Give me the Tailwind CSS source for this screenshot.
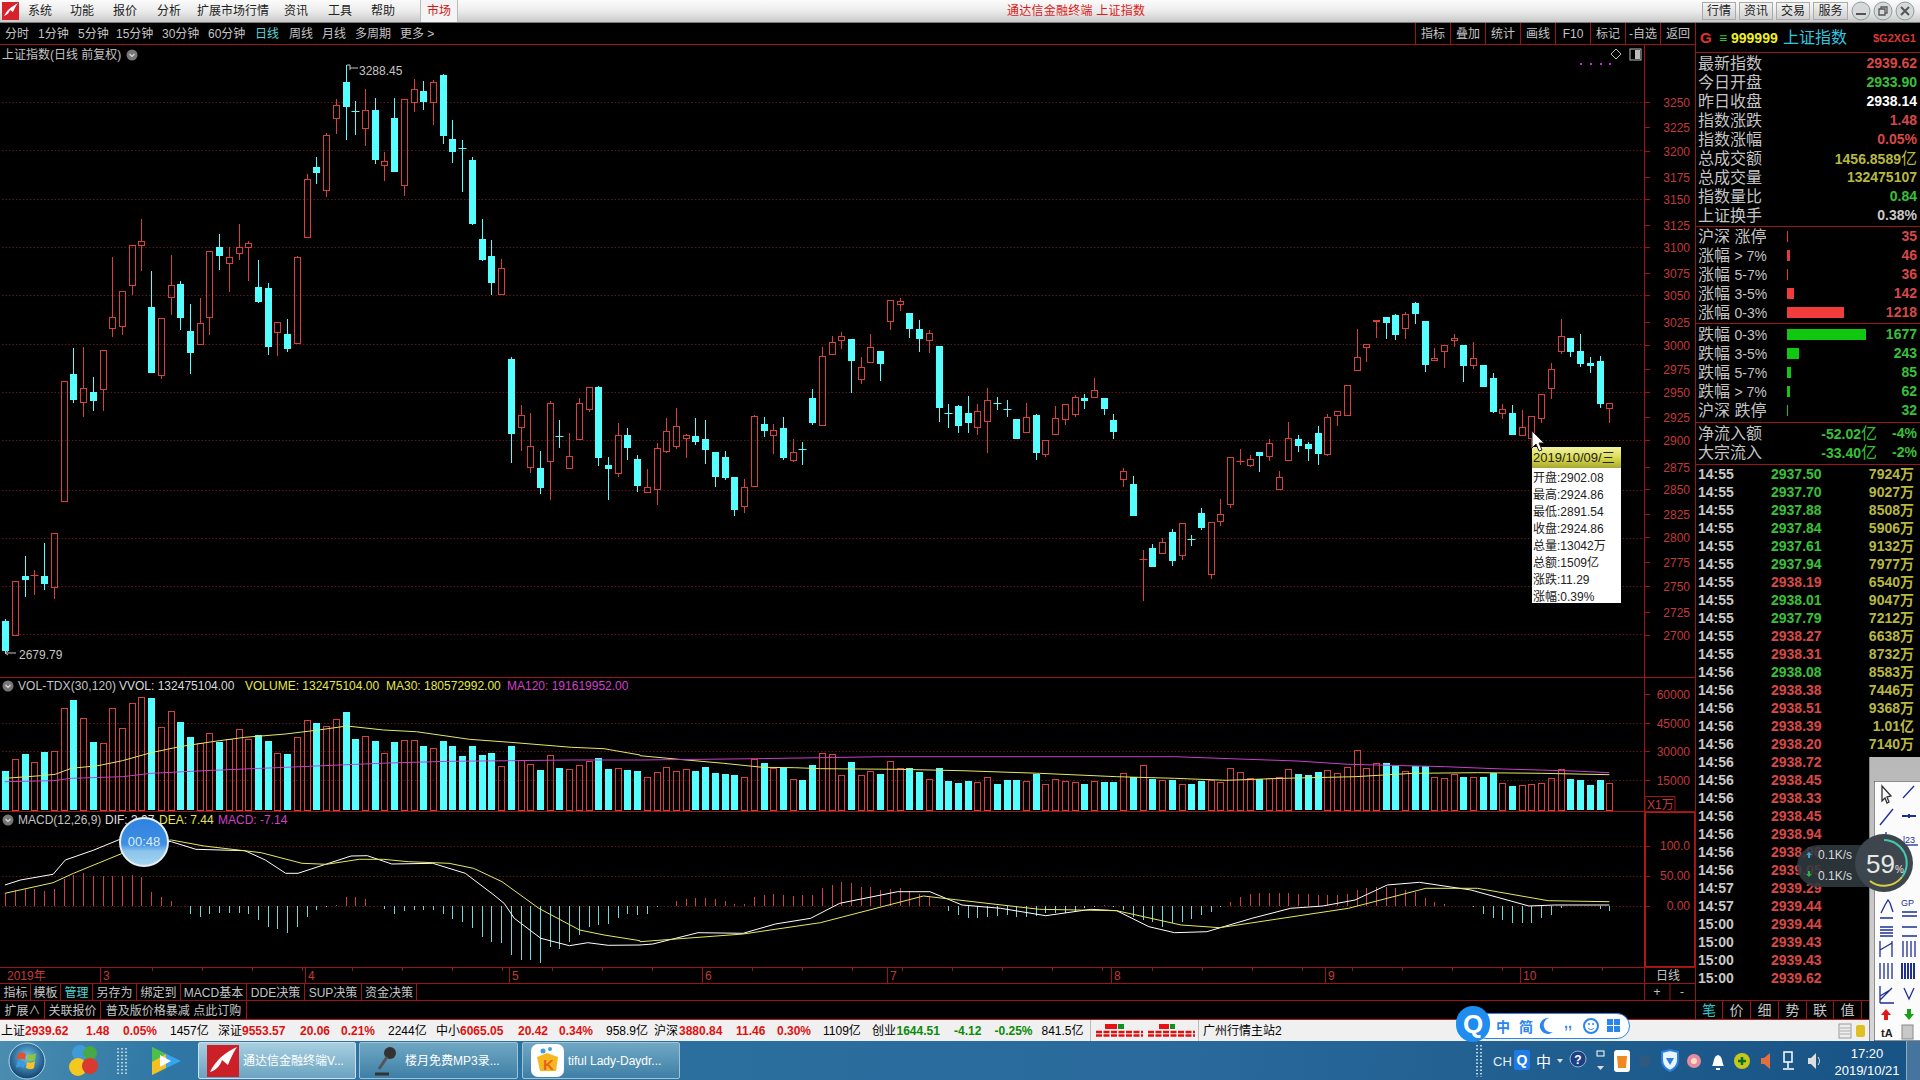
<!DOCTYPE html>
<html lang="zh-CN">
<head>
    <meta charset="UTF-8">
    <title>通达信金融终端 上证指数</title>
    <script src="https://cdn.jsdelivr.net/npm/@tailwindcss/browser@4"></script>
</head>
<body class="relative w-[1920px] h-[1080px] overflow-hidden bg-black flex flex-col text-[12px] text-[#c4c4c4] [font-family:'Liberation_Sans','Noto_Sans_CJK_SC',sans-serif]">

    <!-- chart canvas, filled by the script at the bottom -->
    <svg id="chart" class="absolute left-0 top-0" width="1920" height="1080" viewBox="0 0 1920 1080"></svg>

    <!-- title bar -->
    <div class="relative h-[23px] shrink-0 flex items-center border-b border-[#7c7c7c] bg-gradient-to-b from-[#fbfbfb] via-[#ececec] to-[#c9c9c9] text-[#222]">
        <div class="w-[28px] pl-[2px]">
            <svg width="17" height="18" viewBox="0 0 17 18"><rect width="17" height="18" fill="#d8222a"/><path d="M2 14 C5 8 9 5 16 1 C13 5 12 8 11 10 L8 8 C7 11 5 13 2 14Z" fill="#fff"/></svg>
        </div>
        <div class="w-[42px]">系统</div>
        <div class="w-[43px]">功能</div>
        <div class="w-[44px]">报价</div>
        <div class="w-[40px]">分析</div>
        <div class="w-[87px]">扩展市场行情</div>
        <div class="w-[44px]">资讯</div>
        <div class="w-[43px]">工具</div>
        <div class="w-[49px]">帮助</div>
        <div class="w-[38px] h-[22px] flex items-center justify-center border-x border-[#bbb] bg-[#f4f4f4] text-[#d01818]">市场</div>
        <div class="w-[549px]"></div>
        <div class="w-[138px] text-[#e01818] whitespace-nowrap tracking-[0.25px]">通达信金融终端 上证指数</div>
        <div class="flex-1"></div>
        <div class="flex gap-[3px] mr-[3px]">
            <div class="w-[34px] h-[18px] flex items-center justify-center border border-[#aaa] bg-gradient-to-b from-[#f4f4f4] to-[#cfcfcf]">行情</div>
            <div class="w-[34px] h-[18px] flex items-center justify-center border border-[#aaa] bg-gradient-to-b from-[#f4f4f4] to-[#cfcfcf]">资讯</div>
            <div class="w-[34px] h-[18px] flex items-center justify-center border border-[#aaa] bg-gradient-to-b from-[#f4f4f4] to-[#cfcfcf]">交易</div>
            <div class="w-[35px] h-[18px] flex items-center justify-center border border-[#aaa] bg-gradient-to-b from-[#f4f4f4] to-[#cfcfcf]">服务</div>
        </div>
        <div class="flex gap-[2px] pr-[5px]">
            <svg width="20" height="20" viewBox="0 0 20 20"><circle cx="10" cy="10" r="9" fill="#d6d9da" stroke="#8a9a9c"/><path d="M5 13h10" stroke="#555" stroke-width="2"/></svg>
            <svg width="20" height="20" viewBox="0 0 20 20"><circle cx="10" cy="10" r="9" fill="#d6d9da" stroke="#8a9a9c"/><path d="M6 8h6v6H6zM8 8V6h6v6h-2" fill="none" stroke="#555" stroke-width="1.3"/></svg>
            <svg width="20" height="20" viewBox="0 0 20 20"><circle cx="10" cy="10" r="9" fill="#d6d9da" stroke="#8a9a9c"/><path d="M6 6l8 8M14 6l-8 8" stroke="#555" stroke-width="2"/></svg>
        </div>
    </div>

    <!-- main area -->
    <div class="relative h-[996px] shrink-0 flex">

        <!-- left: period bar and chart panes -->
        <div class="w-[1695px] flex flex-col">
            <div class="h-[22px] flex items-center pl-[5px] border-b border-[#9c1414]">
                <div class="w-[33px]">分时</div>
                <div class="w-[40px]">1分钟</div>
                <div class="w-[38px]">5分钟</div>
                <div class="w-[46px]">15分钟</div>
                <div class="w-[46px]">30分钟</div>
                <div class="w-[47px]">60分钟</div>
                <div class="w-[34px] text-[#4fd8d8]">日线</div>
                <div class="w-[33px]">周线</div>
                <div class="w-[33px]">月线</div>
                <div class="w-[45px]">多周期</div>
                <div>更多 &gt;</div>
                <div class="flex-1"></div>
                <div class="w-[35px] h-full flex items-center justify-center border-l border-[#9c1414]">指标</div>
                <div class="w-[35px] h-full flex items-center justify-center border-l border-[#9c1414]">叠加</div>
                <div class="w-[35px] h-full flex items-center justify-center border-l border-[#9c1414]">统计</div>
                <div class="w-[35px] h-full flex items-center justify-center border-l border-[#9c1414]">画线</div>
                <div class="w-[35px] h-full flex items-center justify-center border-l border-[#9c1414]">F10</div>
                <div class="w-[35px] h-full flex items-center justify-center border-l border-[#9c1414]">标记</div>
                <div class="w-[35px] h-full flex items-center justify-center border-l border-[#9c1414]">-自选</div>
                <div class="w-[35px] h-full flex items-center justify-center border-l border-[#9c1414]">返回</div>
            </div>

            <div class="h-[633px] border-b border-[#9c1414] pl-[2px] pt-[1px]">
                <div class="flex items-center gap-[5px] h-[17px]">
                    <span>上证指数(日线 前复权)</span>
                    <svg width="12" height="12" viewBox="0 0 12 12"><circle cx="6" cy="6" r="5.5" fill="#777"/><path d="M3.5 5l2.5 2.5L8.5 5" fill="none" stroke="#ddd" stroke-width="1.2"/></svg>
                </div>
            </div>

            <div class="h-[134px] border-b border-[#9c1414] pl-[2px]">
                <div class="flex items-center h-[15px] whitespace-nowrap">
                    <svg class="w-[12px] mr-[4px]" width="12" height="12" viewBox="0 0 12 12"><circle cx="6" cy="6" r="5.5" fill="#777"/><path d="M3.5 5l2.5 2.5L8.5 5" fill="none" stroke="#ddd" stroke-width="1.2"/></svg>
                    <span class="w-[101px] tracking-[0.1px]">VOL-TDX(30,120)</span>
                    <span class="w-[126px] text-[#d8d8d8]">VVOL: 132475104.00</span>
                    <span class="w-[141px] text-[#e6e650]">VOLUME: 132475104.00</span>
                    <span class="w-[121px] text-[#e6e650]">MA30: 180572992.00</span>
                    <span class="text-[#d040c8]">MA120: 191619952.00</span>
                </div>
            </div>

            <div class="h-[156px] border-b border-[#9c1414] pl-[2px]">
                <div class="flex items-center h-[15px] whitespace-nowrap">
                    <svg class="w-[12px] mr-[4px]" width="12" height="12" viewBox="0 0 12 12"><circle cx="6" cy="6" r="5.5" fill="#777"/><path d="M3.5 5l2.5 2.5L8.5 5" fill="none" stroke="#ddd" stroke-width="1.2"/></svg>
                    <span class="w-[87px]">MACD(12,26,9)</span>
                    <span class="w-[54px] text-[#e0e0e0]">DIF: 3.07</span>
                    <span class="w-[59px] text-[#e6e650]">DEA: 7.44</span>
                    <span class="text-[#d040c8]">MACD: -7.14</span>
                </div>
            </div>

            <div class="h-[16px] border-b border-[#9c1414]"></div>

            <div class="h-[17px] flex border-b border-[#9c1414] pl-[1px]">
                <div class="w-[30px] pt-[2px] flex items-center justify-center border-r border-[#9c1414]">指标</div>
                <div class="w-[30px] pt-[2px] flex items-center justify-center border-r border-[#9c1414]">模板</div>
                <div class="w-[32px] pt-[2px] flex items-center justify-center border-r border-[#9c1414] text-[#4fd8d8]">管理</div>
                <div class="w-[44px] pt-[2px] flex items-center justify-center border-r border-[#9c1414]">另存为</div>
                <div class="w-[44px] pt-[2px] flex items-center justify-center border-r border-[#9c1414]">绑定到</div>
                <div class="w-[66px] pt-[2px] flex items-center justify-center border-r border-[#9c1414]">MACD基本</div>
                <div class="w-[58px] pt-[2px] flex items-center justify-center border-r border-[#9c1414]">DDE决策</div>
                <div class="w-[57px] pt-[2px] flex items-center justify-center border-r border-[#9c1414]">SUP决策</div>
                <div class="w-[55px] pt-[2px] flex items-center justify-center border-r border-[#9c1414]">资金决策</div>
            </div>

            <div class="h-[18px] flex pl-[1px]">
                <div class="w-[44px] pt-[2px] flex items-center justify-center border-r border-[#9c1414]">扩展∧</div>
                <div class="w-[56px] pt-[2px] flex items-center justify-center border-r border-[#9c1414]">关联报价</div>
                <div class="w-[146px] pt-[2px] flex items-center justify-center border-r border-[#9c1414]">普及版价格暴减 点此订购</div>
            </div>
        </div>

        <!-- right: quote panel -->
        <div class="w-[225px] flex flex-col border-l border-[#9c1414] text-[14px]">
            <div class="h-[30px] pt-[1px] flex items-center border-b border-[#9c1414] pl-[4px] whitespace-nowrap">
                <span class="w-[19px] font-bold text-[#e03030] text-[15px]">G</span>
                <span class="w-[12px] text-[#30c030]">≡</span>
                <span class="w-[52px] font-bold text-[#f0f020]">999999</span>
                <span class="w-[90px] text-[16px] text-[#30c8e0]">上证指数</span>
                <span class="text-[11px] font-bold text-[#d83838]">$G2XG1</span>
            </div>

            <div class="h-[174px] pt-[1px] border-b border-[#9c1414] pl-[2px] pr-[3px]">
                <div class="h-[19px] flex justify-between items-center"><span class="text-[16px]">最新指数</span><span class="font-bold text-[#d84848]">2939.62</span></div>
                <div class="h-[19px] flex justify-between items-center"><span class="text-[16px]">今日开盘</span><span class="font-bold text-[#38c038]">2933.90</span></div>
                <div class="h-[19px] flex justify-between items-center"><span class="text-[16px]">昨日收盘</span><span class="font-bold text-white">2938.14</span></div>
                <div class="h-[19px] flex justify-between items-center"><span class="text-[16px]">指数涨跌</span><span class="font-bold text-[#d84848]">1.48</span></div>
                <div class="h-[19px] flex justify-between items-center"><span class="text-[16px]">指数涨幅</span><span class="font-bold text-[#d84848]">0.05%</span></div>
                <div class="h-[19px] flex justify-between items-center"><span class="text-[16px]">总成交额</span><span class="font-bold text-[#b8b840]">1456.8589<span class="text-[16px] font-normal">亿</span></span></div>
                <div class="h-[19px] flex justify-between items-center"><span class="text-[16px]">总成交量</span><span class="font-bold text-[#b8b840]">132475107</span></div>
                <div class="h-[19px] flex justify-between items-center"><span class="text-[16px]">指数量比</span><span class="font-bold text-[#38c038]">0.84</span></div>
                <div class="h-[19px] flex justify-between items-center"><span class="text-[16px]">上证换手</span><span class="font-bold text-[#c8c8c8]">0.38%</span></div>
            </div>

            <div class="h-[97px] border-b border-[#9c1414] pl-[2px] pr-[3px]">
                <div class="h-[19px] flex items-center"><span class="w-[89px] text-[16px]">沪深 涨停</span><span class="w-[1px] h-[11px] bg-[#e83838]"></span><span class="ml-auto font-bold text-[#d84848]">35</span></div>
                <div class="h-[19px] flex items-center"><span class="w-[89px] text-[16px]">涨幅 <span class="text-[14px]">&gt; 7%</span></span><span class="w-[3px] h-[11px] bg-[#e83838]"></span><span class="ml-auto font-bold text-[#d84848]">46</span></div>
                <div class="h-[19px] flex items-center"><span class="w-[89px] text-[16px]">涨幅 <span class="text-[14px]">5-7%</span></span><span class="w-[1px] h-[11px] bg-[#e83838]"></span><span class="ml-auto font-bold text-[#d84848]">36</span></div>
                <div class="h-[19px] flex items-center"><span class="w-[89px] text-[16px]">涨幅 <span class="text-[14px]">3-5%</span></span><span class="w-[7px] h-[11px] bg-[#f03c3c]"></span><span class="ml-auto font-bold text-[#d84848]">142</span></div>
                <div class="h-[19px] flex items-center"><span class="w-[89px] text-[16px]">涨幅 <span class="text-[14px]">0-3%</span></span><span class="w-[57px] h-[11px] bg-[#f03c3c]"></span><span class="ml-auto font-bold text-[#d84848]">1218</span></div>
            </div>

            <div class="h-[99px] border-b border-[#9c1414] pl-[2px] pr-[3px] pt-[1px]">
                <div class="h-[19px] flex items-center"><span class="w-[89px] text-[16px]">跌幅 <span class="text-[14px]">0-3%</span></span><span class="w-[79px] h-[11px] bg-[#10c810]"></span><span class="ml-auto font-bold text-[#38c038]">1677</span></div>
                <div class="h-[19px] flex items-center"><span class="w-[89px] text-[16px]">跌幅 <span class="text-[14px]">3-5%</span></span><span class="w-[12px] h-[11px] bg-[#10c810]"></span><span class="ml-auto font-bold text-[#38c038]">243</span></div>
                <div class="h-[19px] flex items-center"><span class="w-[89px] text-[16px]">跌幅 <span class="text-[14px]">5-7%</span></span><span class="w-[4px] h-[11px] bg-[#10c810]"></span><span class="ml-auto font-bold text-[#38c038]">85</span></div>
                <div class="h-[19px] flex items-center"><span class="w-[89px] text-[16px]">跌幅 <span class="text-[14px]">&gt; 7%</span></span><span class="w-[3px] h-[11px] bg-[#10c810]"></span><span class="ml-auto font-bold text-[#38c038]">62</span></div>
                <div class="h-[19px] flex items-center"><span class="w-[89px] text-[16px]">沪深 跌停</span><span class="w-[1px] h-[11px] bg-[#10c810]"></span><span class="ml-auto font-bold text-[#38c038]">32</span></div>
            </div>

            <div class="h-[42px] pt-[1px] border-b border-[#9c1414] pl-[2px] pr-[3px]">
                <div class="h-[19px] flex items-center"><span class="text-[16px]">净流入额</span><span class="ml-auto font-bold text-[#38c038]">-52.02<span class="text-[16px] font-normal">亿</span></span><span class="w-[40px] text-right font-bold text-[#38c038]">-4%</span></div>
                <div class="h-[19px] flex items-center"><span class="text-[16px]">大宗流入</span><span class="ml-auto font-bold text-[#38c038]">-33.40<span class="text-[16px] font-normal">亿</span></span><span class="w-[40px] text-right font-bold text-[#38c038]">-2%</span></div>
            </div>

            <div id="ticks" class="h-[535px] overflow-hidden pl-[2px]"></div>

            <div class="h-[19px] flex border-t border-[#9c1414]">
                <div class="w-[27px] flex items-center justify-center border-r border-[#9c1414] text-[#30c8c8] text-[14px]">笔</div>
                <div class="w-[28px] flex items-center justify-center border-r border-[#9c1414] text-[14px]">价</div>
                <div class="w-[28px] flex items-center justify-center border-r border-[#9c1414] text-[14px]">细</div>
                <div class="w-[28px] flex items-center justify-center border-r border-[#9c1414] text-[14px]">势</div>
                <div class="w-[27px] flex items-center justify-center border-r border-[#9c1414] text-[14px]">联</div>
                <div class="w-[28px] flex items-center justify-center border-r border-[#9c1414] text-[14px]">值</div>
            </div>
        </div>
    </div>

    <!-- index ticker -->
    <div class="relative h-[22px] shrink-0 flex items-center bg-[#f0f0f0] border-t border-[#a81c1c] text-black whitespace-nowrap">
        <span class="w-[25px] pl-[1px]">上证</span>
        <span class="w-[61px] font-bold text-[#e01010]">2939.62</span>
        <span class="w-[37px] font-bold text-[#e01010]">1.48</span>
        <span class="w-[47px] font-bold text-[#e01010]">0.05%</span>
        <span class="w-[48px]">1457亿</span>
        <span class="w-[24px]">深证</span>
        <span class="w-[58px] font-bold text-[#e01010]">9553.57</span>
        <span class="w-[41px] font-bold text-[#e01010]">20.06</span>
        <span class="w-[47px] font-bold text-[#e01010]">0.21%</span>
        <span class="w-[48px]">2244亿</span>
        <span class="w-[24px]">中小</span>
        <span class="w-[58px] font-bold text-[#e01010]">6065.05</span>
        <span class="w-[41px] font-bold text-[#e01010]">20.42</span>
        <span class="w-[47px] font-bold text-[#e01010]">0.34%</span>
        <span class="w-[48px]">958.9亿</span>
        <span class="w-[25px]">沪深</span>
        <span class="w-[57px] font-bold text-[#e01010]">3880.84</span>
        <span class="w-[41px] font-bold text-[#e01010]">11.46</span>
        <span class="w-[46px] font-bold text-[#e01010]">0.30%</span>
        <span class="w-[49px]">1109亿</span>
        <span class="w-[24.5px]">创业</span>
        <span class="w-[57.5px] font-bold text-[#0a8a0a]">1644.51</span>
        <span class="w-[40.5px] font-bold text-[#0a8a0a]">-4.12</span>
        <span class="w-[47px] font-bold text-[#0a8a0a]">-0.25%</span>
        <span class="w-[48.5px]">841.5亿</span>
        <div class="w-[109px] h-full border-x border-[#bbb]">
            <svg width="107" height="21" viewBox="1092 1020 107 21">
                <path d="M1106 1024h12v5h-12zM1160 1024h10v5h-10z" fill="#e81010"/>
                <path d="M1119 1024h6v5h-6zM1171 1024h5v5h-5z" fill="#109020"/>
                <path d="M1097 1032h47M1097 1035.5h47M1149 1032h47M1149 1035.5h47" stroke="#e01010" stroke-width="2.5" stroke-dasharray="6 1.5"/>
            </svg>
        </div>
        <span class="ml-[4px]">广州行情主站2</span>
        <div class="flex-1"></div>
        <svg class="mr-[52px]" width="30" height="18" viewBox="0 0 30 18"><rect x="1" y="2" width="12" height="14" fill="#eee" stroke="#999"/><path d="M2 6h10M2 9h10M2 12h10" stroke="#aaa"/><rect x="18" y="3" width="9" height="12" rx="2" fill="#e0c020"/></svg>
    </div>

    <!-- taskbar -->
    <div class="relative h-[39px] shrink-0 flex items-center bg-[linear-gradient(100deg,#4a8db0_0%,#2f76a4_9%,#2a6e9e_40%,#2a6a9c_60%,#175384_100%)] whitespace-nowrap text-white">
        <svg class="ml-[7px]" width="40" height="38" viewBox="0 0 40 38">
            <defs><radialGradient id="orb" cx="50%" cy="40%" r="60%"><stop offset="0" stop-color="#6ec6ee"/><stop offset="1" stop-color="#11406e"/></radialGradient></defs>
            <circle cx="20" cy="19" r="18" fill="url(#orb)" stroke="#b5d8e8" stroke-width="1"/>
            <path d="M11 12c3-2 6-1 8 0l-1 6c-2-1-5-2-8 0z" fill="#e8502a"/>
            <path d="M21 12c3 1 5 1 8-1l-1 7c-3 2-5 1-8 0z" fill="#8cc63e"/>
            <path d="M10 20c3-2 6-1 8 0l-1 6c-2-1-5-2-8 0z" fill="#3a9be0"/>
            <path d="M20 20c3 1 5 1 8-1l-1 7c-3 2-5 1-8 0z" fill="#f6c428"/>
        </svg>
        <svg class="ml-[22px]" width="30" height="36" viewBox="0 0 30 36">
            <circle cx="11" cy="10" r="8" fill="#3f9bd8"/><circle cx="21" cy="10" r="7" fill="#46a848"/>
            <circle cx="9" cy="24" r="9" fill="#f4c81e"/><circle cx="21" cy="23" r="8" fill="#d83a30"/>
        </svg>
        <svg class="ml-[18px]" width="10" height="30" viewBox="0 0 10 30"><path d="M1 2v26M5 2v26M9 2v26" stroke="#b8cfdc" stroke-width="2" stroke-dasharray="1.5 2"/></svg>
        <svg class="ml-[22px]" width="34" height="32" viewBox="0 0 34 32">
            <path d="M3 2L32 16 3 30z" fill="#37a5ee"/><path d="M3 2l14 7-14 8z" fill="#4cc04a"/><path d="M3 17l14-8 0 14-14 7z" fill="#f6c020"/><path d="M11 10l11 6-11 6z" fill="#fff"/>
        </svg>
        <div class="absolute left-[198px] top-[1px] w-[158px] h-[37px] flex items-center border border-[#cde0ea] rounded-[2px] bg-[linear-gradient(180deg,#a7cfe0,#6ba3c0)]">
            <svg class="ml-[8px]" width="32" height="32" viewBox="0 0 32 32"><rect width="32" height="32" fill="#cc2028"/><path d="M3 27C9 15 17 8 30 2C25 10 23 15 21 20L15 15C13 21 9 25 3 27Z" fill="#fff"/></svg>
            <span class="ml-[4px]">通达信金融终端V...</span>
        </div>
        <div class="absolute left-[359px] top-[1px] w-[159px] h-[37px] flex items-center border border-[#9fc2d4] rounded-[2px] bg-[linear-gradient(180deg,#6fa8c4,#3f7fa6)]">
            <svg class="ml-[13px]" width="26" height="32" viewBox="0 0 26 32"><circle cx="17" cy="8" r="6" fill="#333"/><path d="M14 12L6 24" stroke="#555" stroke-width="3"/><path d="M2 29h14" stroke="#333" stroke-width="3"/></svg>
            <span class="ml-[6px]">楼月免费MP3录...</span>
        </div>
        <div class="absolute left-[522px] top-[1px] w-[158px] h-[37px] flex items-center border border-[#9fc2d4] rounded-[2px] bg-[linear-gradient(180deg,#6fa8c4,#3f7fa6)]">
            <svg class="ml-[8px]" width="33" height="33" viewBox="0 0 33 33"><rect width="33" height="33" rx="7" fill="#fff"/><path d="M6 13l10-4 11 4-2 14H9z" fill="#f5b820"/><text x="12" y="26" font-size="15" font-weight="700" fill="#e8641a">K</text><circle cx="12" cy="7" r="2.5" fill="#3da0e0"/><circle cx="19" cy="5" r="2" fill="#3da0e0"/></svg>
            <span class="ml-[4px]">tiful Lady-Daydr...</span>
        </div>
        <div class="absolute right-0 top-0 w-[14px] h-full bg-white/20 border-l border-white/40"></div>
        <svg class="absolute left-[1470px] top-0" width="360" height="39" viewBox="1470 1041 360 39">
            <path d="M1477 1045v32M1481 1045v32" stroke="#b8cfdc" stroke-width="2" stroke-dasharray="1.5 2"/>
            <text x="1493" y="1066" font-size="13" fill="#e8f0f4">CH</text>
            <rect x="1514" y="1050" width="16" height="20" rx="2" fill="#1f7ae8"/>
            <text x="1522" y="1065" font-size="14" font-weight="700" fill="#fff" text-anchor="middle">Q</text>
            <text x="1536" y="1067" font-size="15" fill="#fff">中</text>
            <path d="M1557 1059h6l-3 4z" fill="#ddd"/>
            <circle cx="1578" cy="1059" r="8" fill="#1e3f86" stroke="#8fb0d0"/>
            <text x="1578" y="1064" font-size="12" font-weight="700" fill="#fff" text-anchor="middle">?</text>
            <rect x="1597" y="1051" width="7" height="5" fill="none" stroke="#fff"/><path d="M1597 1066h7l-3.5 4z" fill="#ddd"/>
            <rect x="1614" y="1050" width="16" height="22" rx="3" fill="#fff"/><path d="M1617 1056l10 0-1 12h-8z" fill="#f08a20"/>
            <circle cx="1645" cy="1061" r="6" fill="#3a5a78" opacity="0.6"/>
            <path d="M1662 1052l8-2 8 2v8c0 5-4 9-8 11-4-2-8-6-8-11z" fill="#e8f4ff" stroke="#2a80e0" stroke-width="2"/><path d="M1666 1058h8l-4 7z" fill="#2a80e0"/>
            <circle cx="1694" cy="1061" r="7" fill="#e88aa0"/><circle cx="1694" cy="1061" r="3" fill="#f6e0c0"/>
            <path d="M1712 1066c2-2 1-10 6-11 5 1 4 9 6 11zM1716 1068h4v2h-4z" fill="#fff"/>
            <circle cx="1742" cy="1061" r="8" fill="#c8c818"/><path d="M1738 1061h8M1742 1057v8" stroke="#0a6a20" stroke-width="2.5"/>
            <path d="M1761 1058h3l6-5v16l-6-5h-3z" fill="#e07040"/>
            <path d="M1784 1052h8v10h-8zM1788 1062v6M1783 1069h11" fill="none" stroke="#fff" stroke-width="1.5"/>
            <path d="M1808 1058h3l5-5v16l-5-5h-3z" fill="#ddd"/><path d="M1818 1057c2 3 2 5 0 8" stroke="#ddd" fill="none"/>
        </svg>
        <div class="absolute left-[1827px] top-[3px] w-[80px] text-center text-[13px]">17:20</div>
        <div class="absolute left-[1827px] top-[20px] w-[80px] text-center text-[13px]">2019/10/21</div>
    </div>

    <!-- tooltip for the hovered candle -->
    <div class="absolute left-[1532px] top-[447px] w-[89px] h-[156px] bg-white text-[#222] whitespace-nowrap">
        <div class="h-[21px] flex items-center pl-[1px] text-[13px] bg-gradient-to-b from-[#f2f2a0] via-[#dcdc50] to-[#a8a830]">2019/10/09/三</div>
        <div class="pl-[1px] pt-[2px] leading-[17px]">
            <div>开盘:2902.08</div>
            <div>最高:2924.86</div>
            <div>最低:2891.54</div>
            <div>收盘:2924.86</div>
            <div>总量:13042万</div>
            <div>总额:1509亿</div>
            <div>涨跌:11.29</div>
            <div>涨幅:0.39%</div>
        </div>
    </div>
    <svg class="absolute left-[1530px] top-[430px]" width="16" height="24" viewBox="0 0 16 24"><path d="M2 1v17l4-4 3 7 3-1-3-7h5z" fill="#fff" stroke="#222"/></svg>

    <!-- recording timer -->
    <div class="absolute left-[119px] top-[817px] w-[50px] h-[50px] rounded-full border-2 border-[#e4eef4] bg-[linear-gradient(180deg,#2f82e0_0%,#3f8fe4_55%,#8cc4ec_70%,#a4d4f0_100%)] flex items-center justify-center text-[13px] text-[#dfeefa]">00:48</div>

    <!-- input method bar -->
    <div class="absolute left-[1473px] top-[1013px] w-[157px] h-[26px] rounded-[13px] bg-white border border-[#2a86ee]"></div>
    <div class="absolute left-[1456px] top-[1006px] w-[34px] h-[36px] rounded-full bg-[#1f8cf0] flex items-center justify-center text-[26px] font-bold text-white">Q</div>
    <svg class="absolute left-[1492px] top-[1014px]" width="136" height="24" viewBox="1492 1014 136 24">
        <text x="1496" y="1032" font-size="14" font-weight="700" fill="#2a86ee">中</text>
        <text x="1519" y="1032" font-size="14" font-weight="700" fill="#2a86ee">简</text>
        <path d="M1549 1018a8 8 0 1 0 4 14 7 7 0 0 1-4-14z" fill="#2a86ee"/>
        <text x="1564" y="1028" font-size="14" font-weight="700" fill="#2a86ee">,,</text>
        <circle cx="1591" cy="1026" r="7" fill="#fff" stroke="#2a86ee" stroke-width="2"/><path d="M1588 1028c2 2 4 2 6 0" fill="none" stroke="#2a86ee"/><circle cx="1589" cy="1024" r="1" fill="#2a86ee"/><circle cx="1593" cy="1024" r="1" fill="#2a86ee"/>
        <path d="M1607 1019h6v6h-6zM1614 1019h6v6h-6zM1607 1026h6v6h-6zM1614 1026h6v6h-6z" fill="#2a86ee"/>
    </svg>

    <!-- floating drawing tools -->
    <div class="absolute left-[1869px] top-[757px] w-[51px] h-[284px] bg-gradient-to-b from-[#b8b8b8] to-[#d8d8d8] border-l border-[#888]">
        <svg class="absolute left-[4px] top-[24px]" width="47" height="260" viewBox="1874 781 47 260">
            <rect x="1874" y="781" width="47" height="260" fill="#fbfbfb" stroke="#222"/>
            <g fill="none" stroke="#1e2f94" stroke-width="1.3">
                <path d="M1882 786l0 15 3-3 2 5 2-1-2-5 4-1z" stroke="#333"/>
                <path d="M1903 798l11-12"/>
                <path d="M1880 825l13-16"/>
                <path d="M1902 816h14M1909 814v4" stroke-width="2"/>
                <path d="M1886 832v14"/>
                <path d="M1881 913l4-8 3-5 2 3 3 9"/>
                <path d="M1880 918h13M1902 912h15M1902 916h15M1880 927h13M1880 930h13M1880 933h13M1880 936h13M1902 927h15M1902 936h15"/>
                <path d="M1880 957v-16M1880 950l12-7M1892 957v-16"/>
                <path d="M1903 957v-16M1907 957v-16M1911 957v-16M1915 957v-16"/>
                <path d="M1880 979v-16M1884 979v-16M1888 979v-16M1892 979v-16"/>
                <path d="M1902 979v-16M1905 979v-16M1908 979v-16M1911 979v-16M1914 979v-16" stroke-width="2"/>
                <path d="M1880 1003v-17M1880 1003h14M1880 1000l12-12M1880 996l10-6"/>
                <path d="M1904 988l5 11 5-11"/>
                <path d="M1906 845h12"/>
            </g>
            <text x="1903" y="843" font-size="9" fill="#1e2f94">l23</text>
            <text x="1901" y="906" font-size="9" fill="#1e2f94">GP</text>
            <path d="M1886 1009l5 6h-3v5h-4v-5h-3z" fill="#e01818"/>
            <path d="M1909 1020l5-6h-3v-5h-4v5h-3z" fill="#18a018"/>
            <text x="1881" y="1037" font-size="11" font-weight="700" fill="#222">tA</text>
            <rect x="1902" y="1025" width="11" height="14" fill="#c8c8c8" stroke="#888"/>
        </svg>
    </div>

    <!-- network / memory widget -->
    <svg class="absolute left-[1790px] top-[830px]" width="125" height="66" viewBox="1790 830 125 66">
        <path d="M1818 845h50v42h-50a21 21 0 0 1 0-42z" fill="#2f3a40" opacity="0.88"/>
        <circle cx="1884" cy="863" r="29" fill="#3c464c"/>
        <path d="M1884 840a23 23 0 0 1 18 37" fill="none" stroke="#40c8b0" stroke-width="2"/>
        <path d="M1902 877a23 23 0 0 1-32 4" fill="none" stroke="#d8d040" stroke-width="2"/>
        <text x="1866" y="873" font-size="26" fill="#e8e8e8">59</text>
        <text x="1895" y="873" font-size="10" fill="#e8e8e8">%</text>
        <path d="M1809 852l3 3h-2v3h-2v-3h-2z" fill="#40a0d8"/>
        <path d="M1809 877l3-3h-2v-3h-2v3h-2z" fill="#30b040"/>
        <text x="1818" y="859" font-size="12" fill="#d8d8d8">0.1K/s</text>
        <text x="1818" y="880" font-size="12" fill="#d8d8d8">0.1K/s</text>
    </svg>

    <script>
        // candles traced from the reference: [high, bodyTop, bodyBottom, low, 0 red / 1 cyan]
        const candles = [
            [619,621,651,653,1],[581,581,635,635,0],[556,576,580,597,1],[570,575,575,595,0],[543,576,584,590,1],[533,533,587,599,0],
            [381,381,501,501,0],[348,374,400,403,1],[347,388,402,417,0],[377,392,401,411,1],[350,350,389,411,0],[257,317,328,337,0],
            [291,291,326,335,0],[245,245,285,295,0],[219,241,245,271,0],[271,307,373,373,1],[318,318,375,379,0],[255,285,297,315,0],
            [281,284,318,330,1],[304,331,353,374,1],[298,323,344,344,0],[251,251,317,335,0],[234,247,256,270,1],[247,257,263,292,0],
            [224,247,253,260,0],[241,243,247,281,0],[260,287,302,303,1],[283,288,347,355,1],[322,322,332,356,0],[319,334,349,352,1],
            [256,257,343,343,0],[174,179,237,237,0],[157,167,173,184,1],[133,135,190,197,0],[99,105,118,134,0],[65,82,107,140,1],
            [101,111,111,135,1],[89,110,128,146,0],[98,110,160,164,1],[152,161,165,181,0],[98,118,172,172,1],[99,99,185,196,0],
            [79,89,102,112,0],[81,91,102,110,1],[80,82,102,125,0],[74,75,136,144,1],[120,139,152,163,1],[140,148,148,192,1],
            [157,160,224,225,1],[219,239,260,261,1],[240,256,283,295,1],[259,268,294,294,0],[357,359,434,463,1],[405,415,427,451,0],
            [413,446,467,473,0],[451,468,488,494,1],[401,403,461,500,0],[420,436,436,448,1],[433,456,468,468,0],[398,403,439,439,0],
            [387,387,409,412,0],[386,387,458,466,1],[457,465,469,500,1],[423,435,473,477,0],[428,435,448,460,1],[455,459,486,492,1],
            [469,487,492,493,0],[443,448,489,505,0],[418,431,451,453,0],[408,426,446,449,0],[434,435,438,458,0],[418,436,442,445,1],
            [420,439,450,464,1],[452,452,477,487,1],[451,457,478,480,1],[477,477,510,516,1],[479,487,506,513,0],[415,416,486,486,0],
            [417,424,431,437,1],[424,430,435,454,0],[417,428,458,460,1],[439,452,460,462,0],[442,449,449,465,1],[389,398,423,425,1],
            [347,356,425,426,0],[336,342,354,354,0],[332,336,340,349,0],[339,339,361,393,1],[357,367,379,384,0],[334,347,362,362,0],
            [351,351,364,381,1],[300,300,321,330,0],[298,301,304,311,0],[313,313,329,338,1],[320,329,339,352,1],[330,333,340,353,0],
            [346,346,408,422,1],[404,413,413,428,1],[405,406,426,433,1],[396,413,423,433,1],[404,411,427,435,0],[388,400,421,453,0],
            [397,403,403,410,1],[400,409,409,417,1],[419,419,439,439,1],[403,417,432,432,0],[414,415,453,460,1],[440,440,454,457,0],
            [406,418,434,434,0],[404,404,419,425,0],[395,397,414,417,0],[394,398,401,409,1],[378,390,397,397,0],[398,398,409,415,1],
            [414,420,432,439,1],[468,471,479,487,0],[476,484,516,516,1],[550,559,559,601,0],[544,548,567,567,1],[538,542,553,553,0],
            [529,532,561,566,1],[523,523,555,560,0],[535,539,539,546,1],[508,513,528,530,1],[522,522,574,579,0],[499,514,521,526,0],
            [457,457,504,508,0],[449,461,461,465,0],[455,459,465,467,0],[452,452,456,472,1],[439,443,456,461,0],[471,477,489,489,0],
            [422,438,460,460,0],[435,439,446,452,1],[442,444,449,461,1],[426,433,454,465,1],[414,417,454,456,0],[411,411,415,426,0],
            [385,385,415,415,0],[329,357,370,370,0],[344,344,347,362,0],[320,320,321,338,0],[317,317,323,339,1],[314,315,335,340,1],
            [312,314,328,339,0],[302,303,314,324,1],[321,321,365,372,1],[348,358,360,360,0],[345,345,351,368,0],[334,338,340,347,0],
            [345,345,366,382,1],[342,358,365,369,0],[365,365,387,387,1],[373,378,412,413,1],[404,409,413,419,0],[405,413,435,435,1],
            [410,427,435,435,0],[416,416,438,448,0],[394,394,418,423,0],[363,369,388,399,0],[319,336,351,354,0],[338,338,352,357,1],
            [334,351,364,367,1],[357,363,366,373,1],[356,361,404,408,1],[403,403,408,423,0]
        ];
        const volTops = [
            771,759,754,762,752,751,708,700,718,742,743,708,728,703,697,698,727,711,722,737,743,733,742,739,729,739,735,741,753,754,
            737,720,723,726,719,712,739,736,741,753,742,740,740,746,748,741,746,756,746,755,753,766,746,760,764,770,755,768,769,765,
            761,758,769,768,770,771,777,772,767,771,769,771,767,773,774,775,777,759,763,768,768,779,780,765,753,754,775,762,775,771,
            774,761,768,768,772,779,768,781,783,781,782,777,784,780,780,781,774,784,779,781,782,784,781,782,782,773,777,765,779,780,
            780,784,784,781,780,782,768,772,778,779,778,777,769,774,775,772,770,773,767,750,768,763,763,766,771,766,766,777,778,774,
            777,777,777,773,783,786,785,784,783,778,769,779,780,785,780,783
        ];
        // macd histogram tips, y in page pixels
        const macdTips = [
            893,890,889,889,891,889,879,875,873,876,876,876,876,875,877,892,897,901,906,914,917,914,913,913,913,914,920,927,929,933,
            927,917,910,907,905,897,897,899,906,909,914,911,910,910,910,914,919,922,928,937,942,943,955,960,960,963,947,949,942,935,
            927,925,924,918,914,915,914,907,906,901,899,898,898,899,901,904,904,897,895,894,895,896,895,895,888,885,882,883,887,887,
            890,889,888,891,894,897,906,911,915,918,918,917,916,915,917,917,916,913,913,913,911,908,907,905,907,910,917,920,922,927,
            923,922,919,915,912,907,902,897,894,893,893,893,893,894,894,895,895,895,894,890,888,887,887,888,890,892,898,902,904,906,
            906,907,914,918,920,923,923,923,918,915,908,906,906,906,909,911
        ];

        const z6 = (p) => [p[0] / 2.45, 660 + p[1] / 3];
        const z12 = (p) => [640 + p[0] / 1.5525, 670 + p[1] / 3];

        const ma30 = [[12,355],[100,347],[135,343],[175,325],[240,317],[300,302],[370,278],[440,260],[520,245],[600,232],[700,222],[780,210],[850,198],[940,210],[1020,215],[1150,238],[1250,247],[1400,262],[1480,266],[1568,285]].map(z6)
            .concat([[0,257],[60,268],[130,280],[190,292],[240,293],[280,296],[400,298],[500,302],[620,310],[740,320],[830,325],[910,331],[1000,325],[1110,320],[1200,310],[1300,308],[1400,310],[1505,314]].map(z12));
        const ma120 = [[12,365],[130,362],[175,355],[300,350],[370,340],[500,332],[700,322],[850,314],[950,309],[1100,304],[1250,302],[1400,300],[1568,300]].map(z6)
            .concat([[0,270],[180,266],[380,260],[830,260],[930,267],[1020,273],[1100,283],[1250,290],[1340,297],[1450,303],[1505,308]].map(z12));
        const dif = [[12,675],[50,660],[130,643],[160,600],[230,570],[300,535],[420,545],[480,568],[600,572],[650,600],[700,640],[730,640],[800,612],[860,588],[900,587],[960,612],[1060,610],[1140,640],[1210,705],[1235,730],[1260,775],[1325,835],[1395,857],[1440,848],[1490,856],[1568,855]].map(z6)
            .concat([[0,825],[20,822],[90,788],[160,790],[210,762],[265,745],[310,700],[400,665],[450,665],[500,705],[560,715],[630,737],[700,718],[740,722],[790,770],[830,788],[880,785],[950,745],[1010,715],[1060,708],[1110,690],[1160,645],[1210,637],[1290,660],[1380,708],[1420,705],[1505,705]].map(z12));
        const dea = [[12,700],[130,668],[180,640],[300,580],[360,545],[420,540],[500,558],[640,578],[740,610],[800,613],[880,598],[940,598],[1000,605],[1100,610],[1160,625],[1230,665],[1320,745],[1420,810],[1480,825],[1568,842]].map(z6)
            .concat([[0,815],[160,792],[280,758],[440,678],[620,718],[740,722],[840,765],[900,773],[1100,715],[1220,655],[1300,655],[1410,692],[1505,695]].map(z12));

        const RED = '#d84040', CYAN = '#55ffff', AXIS = '#9c1414', LABEL = '#c23a3a';
        const cx = (i) => Math.round(5.3 + 9.721 * i) + 0.5;
        let s = '';

        const hline = (y, x2 = 1644) => { s += `<path d="M2 ${y + 0.5}H${x2}" stroke="#5e1616" stroke-dasharray="1.5 2"/>`; };
        const poly = (pts, color) => { s += `<polyline points="${pts.map(p => p[0].toFixed(1) + ',' + p[1].toFixed(1)).join(' ')}" fill="none" stroke="${color}" stroke-width="1"/>`; };
        const label = (x, y, t, color = LABEL, anchor = 'end') => { s += `<text x="${x}" y="${y}" font-size="12" fill="${color}" text-anchor="${anchor}">${t}</text>`; };

        [102,150,199,247,295,344,392,440,490,538,586,634,723,751,780,846,876,906].forEach((y) => hline(y));

        // price axis labels
        [[3250,102],[3225,127],[3200,151],[3175,177],[3150,199],[3125,225],[3100,247],[3075,273],[3050,295],[3025,322],[3000,345],[2975,369],[2950,392],[2925,417],[2900,440],[2875,467],[2850,489],[2825,514],[2800,537],[2775,562],[2750,586],[2725,612],[2700,635]].forEach(([v, y]) => {
            label(1690, y + 5, v);
            s += `<path d="M1644 ${y + 0.5}h6" stroke="${AXIS}"/>`;
        });
        [[60000,694],[45000,723],[30000,751],[15000,780]].forEach(([v, y]) => {
            label(1690, y + 5, v);
            s += `<path d="M1644 ${y + 0.5}h6" stroke="${AXIS}"/>`;
        });
        [['100.0',846],['50.00',876],['0.00',906]].forEach(([v, y]) => {
            label(1690, y + 4, v);
            s += `<path d="M1644 ${y + 0.5}h6" stroke="${AXIS}"/>`;
        });

        s += `<path d="M1644.5 45V1001" stroke="${AXIS}"/>`;
        s += `<rect x="1645" y="812" width="50" height="155" fill="none" stroke="#b01818" stroke-width="2"/>`;
        s += `<path d="M1645 811.5V796.5H1675V811" fill="none" stroke="${AXIS}"/><path d="M1670 984V1000" stroke="${AXIS}"/>`;
        label(1647, 809, 'X1万', LABEL, 'start');
        label(1668, 980, '日线', '#c4c4c4', 'middle');
        label(1657, 996, '+', '#c4c4c4', 'middle');
        label(1682, 996, '-', '#c4c4c4', 'middle');

        // purple marker dots and the two small corner icons
        [1580,1590,1600,1609].forEach((x) => { s += `<rect x="${x}" y="63" width="2" height="2" fill="#c030d0"/>`; });
        s += `<path d="M1616 49l5 5-5 5-5-5z" fill="none" stroke="#bbb"/><rect x="1630" y="49" width="11" height="11" fill="none" stroke="#bbb"/><rect x="1635" y="50" width="5" height="9" fill="#bbb"/>`;

        // date axis
        [['2019年',6],['3',102],['4',307],['5',511],['6',704],['7',889],['8',1113],['9',1327],['10',1522]].forEach(([t, x], i) => {
            label(x + 1, 980, t, LABEL, 'start');
            if (i > 0) s += `<path d="M${x - 1.5} 968V983" stroke="${AXIS}"/>`;
        });
        for (let x = 152; x < 1640; x += 50) s += `<path d="M${x + 0.5} 968v3" stroke="${AXIS}"/>`;

        // volume pane
        volTops.forEach((y, i) => {
            const x = cx(i), k = candles[i] ? candles[i][4] : 0;
            s += k
                ? `<rect x="${x - 3.5}" y="${y}" width="7" height="${810 - y}" fill="${CYAN}"/>`
                : `<rect x="${x - 3}" y="${y + 0.5}" width="6" height="${810 - y}" fill="none" stroke="${RED}"/>`;
        });
        poly(ma30, '#e8e860');
        poly(ma120, '#c840c8');

        // macd pane
        macdTips.forEach((y, i) => {
            if (y === 906) return;
            s += `<path d="M${cx(i)} 906V${y}" stroke="${y < 906 ? '#d04040' : '#70d8d8'}"/>`;
        });
        poly(dif, '#ffffff');
        poly(dea, '#e8e860');

        // candles
        candles.forEach(([h, t, b, l, k], i) => {
            const x = cx(i), color = k ? CYAN : RED;
            s += `<path d="M${x} ${h}V${t}M${x} ${b}V${l}" stroke="${color}"/>`;
            if (b - t < 1) s += `<path d="M${x - 4} ${t + 0.5}h8" stroke="${color}"/>`;
            else if (k) s += `<rect x="${x - 3.5}" y="${t}" width="7" height="${b - t}" fill="${CYAN}"/>`;
            else s += `<rect x="${x - 3}" y="${t + 0.5}" width="6" height="${b - t}" fill="none" stroke="${RED}"/>`;
        });

        // high and low marks
        s += `<path d="M347 65h3l0 5M350 68h8" fill="none" stroke="#c4c4c4"/>`;
        label(359, 75, '3288.45', '#c4c4c4', 'start');
        s += `<path d="M5 653h11M5 653l3-2M5 653l3 2" fill="none" stroke="#c4c4c4"/>`;
        label(19, 659, '2679.79', '#c4c4c4', 'start');

        document.getElementById('chart').innerHTML = s;

        // tick list in the quote panel
        const ticks = [
            ['14:55','2937.50','7924万',0],['14:55','2937.70','9027万',0],['14:55','2937.88','8508万',0],['14:55','2937.84','5906万',0],
            ['14:55','2937.61','9132万',0],['14:55','2937.94','7977万',0],['14:55','2938.19','6540万',1],['14:55','2938.01','9047万',0],
            ['14:55','2937.79','7212万',0],['14:55','2938.27','6638万',1],['14:55','2938.31','8732万',1],['14:56','2938.08','8583万',0],
            ['14:56','2938.38','7446万',1],['14:56','2938.51','9368万',1],['14:56','2938.39','1.01亿',1],['14:56','2938.20','7140万',1],
            ['14:56','2938.72','',1],['14:56','2938.45','',1],['14:56','2938.33','',1],['14:56','2938.45','',1],['14:56','2938.94','',1],
            ['14:56','2938.96','',1],['14:56','2939.05','',1],['14:57','2939.29','',1],['14:57','2939.44','',1],['15:00','2939.44','',1],
            ['15:00','2939.43','',1],['15:00','2939.43','',1],['15:00','2939.62','',1]
        ];
        document.getElementById('ticks').innerHTML = ticks.map(([t, p, v, up]) => `
            <div class="h-[18px] flex items-center font-bold">
                <span class="w-[73px] text-[#c8c8c8]">${t}</span>
                <span class="w-[60px] ${up ? 'text-[#d84848]' : 'text-[#38c038]'}">${p}</span>
                <span class="w-[83px] text-right text-[#b8b840]">${v}</span>
            </div>`).join('');
    </script>
</body>
</html>
